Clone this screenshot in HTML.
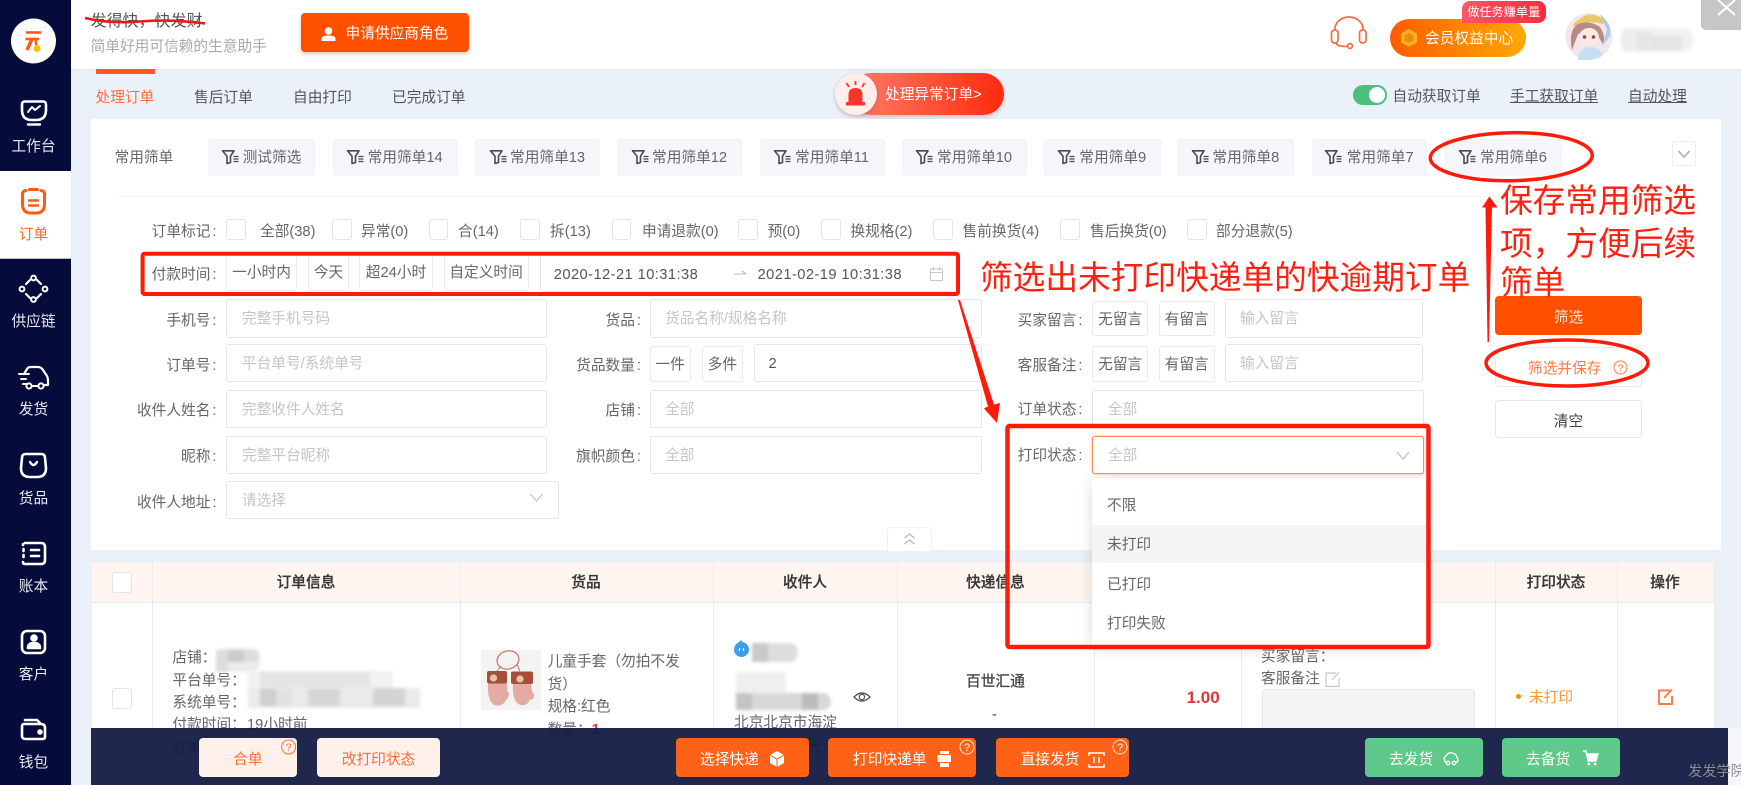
<!DOCTYPE html>
<html lang="zh-CN"><head><meta charset="utf-8"><title>发得快</title>
<style>
html,body{margin:0;padding:0}
body{width:1741px;height:785px;overflow:hidden;position:relative;background:#eaf1f9;font-family:"Liberation Sans","Noto Sans CJK SC",sans-serif;font-size:14.7px;color:#666}
.w{position:absolute;left:0;top:0;width:1741px;height:785px;filter:blur(.35px)}
.a{position:absolute;box-sizing:border-box}
.t{position:absolute;white-space:nowrap;line-height:20px;height:20px}
.s{position:absolute;left:0;width:67px;text-align:center;color:#e8e9f0;line-height:20px;white-space:nowrap}
.chip{position:absolute;top:139px;height:37px;background:#f5f6f9;border-radius:3px;line-height:37px;color:#666;white-space:nowrap;box-sizing:border-box;padding-left:34px;border:1px solid #f1f2f5}
.cb{position:absolute;top:219px;width:19.5px;height:20.5px;background:#fff;border:1px solid #e3e4e7;border-radius:3px;box-sizing:border-box}
.ft{position:absolute;top:222px;line-height:20px;white-space:nowrap;color:#666}
.lb{position:absolute;text-align:right;white-space:nowrap;line-height:20px;color:#666}
.lb span{margin-left:2px}
.box{position:absolute;background:#fff;border:1px solid #e4e5e8;border-radius:3px;box-sizing:border-box;line-height:39px;color:#c3c5c9;white-space:nowrap}
.btn{position:absolute;background:#fff;border:1px solid #e9eaec;border-radius:3px;box-sizing:border-box;text-align:center;color:#666;white-space:nowrap;line-height:36px}
.bb{position:absolute;top:738px;height:39px;border-radius:4px;line-height:45px;white-space:nowrap;box-sizing:border-box}
.th{position:absolute;top:573px;line-height:20px;font-weight:500;color:#383838;white-space:nowrap;transform:translateX(-50%);-webkit-text-stroke:.25px #383838}
.sep{position:absolute;width:1px;background:#e9ecf1}
.pix{position:absolute;filter:blur(1.5px)}
.pix i{position:absolute;display:block}
.dd{position:absolute;left:1107px;color:#666;line-height:20px;white-space:nowrap}
</style></head><body><div class="w">

<!-- header -->
<div class="a" style="left:71px;top:0;width:1670px;height:70px;background:#fff;border-bottom:1px solid #dfe4eb"></div>
<div class="a" style="left:1716px;top:70px;width:25px;height:1px;background:#eaf1f9"></div>
<div class="t" style="left:90.6px;top:12px;font-size:16px;color:#555">发得快，快发财</div>
<div class="t" style="left:90.6px;top:37px;color:#aaa">简单好用可信赖的生意助手</div>
<div class="a" style="left:301px;top:13px;width:168px;height:39px;background:#ff5000;border-radius:4px;box-shadow:0 2px 4px rgba(150,60,20,.3)"></div>
<div class="t" style="left:345.5px;top:23.5px;color:#fff">申请供应商角色</div>
<div class="a" style="left:1701px;top:0;width:40px;height:30px;background:#c6c6c6;border-bottom-left-radius:5px"></div>

<!-- tabs -->
<div class="a" style="left:95.5px;top:69px;width:59px;height:5px;background:#ff5a1f"></div>
<div class="t" style="left:95.5px;top:88px;color:#ff6c3f">处理订单</div>
<div class="t" style="left:194px;top:88px;color:#555">售后订单</div>
<div class="t" style="left:293px;top:88px;color:#555">自由打印</div>
<div class="t" style="left:392px;top:88px;color:#555">已完成订单</div>
<div class="a" style="left:850px;top:73px;width:153.6px;height:42px;border-radius:21px;background:linear-gradient(90deg,#ff7d6a,#ff2a0e);box-shadow:0 2px 4px rgba(120,50,50,.25)"></div>
<div class="a" style="left:834.5px;top:73px;width:42px;height:42px;border-radius:50%;background:#fdeeea;box-shadow:0 2px 4px rgba(120,50,50,.3)"></div>
<div class="t" style="left:885px;top:85px;color:#fff">处理异常订单&gt;</div>
<div class="a" style="left:1352.5px;top:85px;width:34px;height:20px;border-radius:10px;background:#4cbf7c"></div>
<div class="a" style="left:1369px;top:87px;width:16px;height:16px;border-radius:50%;background:#fff"></div>
<div class="t" style="left:1392.5px;top:87px;color:#555">自动获取订单</div>
<div class="t" style="left:1510px;top:87px;color:#555;text-decoration:underline">手工获取订单</div>
<div class="t" style="left:1628px;top:87px;color:#555;text-decoration:underline">自动处理</div>

<!-- VIP -->
<div class="a" style="left:1390px;top:19px;width:135.5px;height:38px;border-radius:19px;background:linear-gradient(90deg,#ff5c00,#ffa900)"></div>
<div class="t" style="left:1425px;top:28.5px;color:#fff">会员权益中心</div>
<div class="a" style="left:1461.5px;top:1px;width:84.5px;height:22px;background:linear-gradient(90deg,#ff5764,#ff2b3d);border-radius:8px 8px 8px 0;color:#fff;font-size:12.2px;line-height:22px;text-align:center;white-space:nowrap">做任务赚单量</div>
<div class="pix" style="left:1620px;top:28px;width:73px;height:24px;background:#f1f1f1;border-radius:10px">
<i style="left:2px;top:0;width:12px;height:24px;background:#ececec;border-radius:8px"></i>
<i style="left:16px;top:4px;width:16px;height:18px;background:#e6e6e6"></i>
<i style="left:32px;top:8px;width:30px;height:14px;background:#e4e4e4"></i>
</div>

<!-- sidebar -->
<div class="a" style="left:0;top:0;width:71px;height:785px;background:#050b3a"></div>
<div class="a" style="left:0;top:171px;width:71px;height:87px;background:#fff"></div>
<div class="a" style="left:0;top:258px;width:71px;height:1px;background:#b9bcc8"></div>
<div class="s" style="top:137px">工作台</div>
<div class="s" style="top:225px;color:#ff6a2c">订单</div>
<div class="s" style="top:312px">供应链</div>
<div class="s" style="top:400px">发货</div>
<div class="s" style="top:489px">货品</div>
<div class="s" style="top:577px">账本</div>
<div class="s" style="top:665px">客户</div>
<div class="s" style="top:753px">钱包</div>

<!-- filter card -->
<div class="a" style="left:91px;top:119px;width:1630px;height:431px;background:#fff;border-radius:3px 3px 0 0"></div>
<div class="t" style="left:114.5px;top:148px">常用筛单</div>
<div class="chip" style="left:207.6px;width:107.4px">测试筛选</div>
<div class="chip" style="left:332.6px;width:125px">常用筛单14</div>
<div class="chip" style="left:475px;width:124.6px">常用筛单13</div>
<div class="chip" style="left:617px;width:125.4px">常用筛单12</div>
<div class="chip" style="left:760px;width:125px">常用筛单11</div>
<div class="chip" style="left:902px;width:125px">常用筛单10</div>
<div class="chip" style="left:1044.3px;width:116.7px">常用筛单9</div>
<div class="chip" style="left:1177.4px;width:116.6px">常用筛单8</div>
<div class="chip" style="left:1311.7px;width:115.3px">常用筛单7</div>
<div class="chip" style="left:1445px;width:116.5px">常用筛单6</div>
<div class="a" style="left:1671.7px;top:141px;width:24.5px;height:25px;background:#fff;border:1px solid #eceef1"></div>
<div class="a" style="left:116.5px;top:196px;width:1580px;height:1px;background:#f3f4f6"></div>

<!-- flags -->
<div class="lb" style="left:100px;width:116.5px;top:222px">订单标记<span>:</span></div>
<div class="cb" style="left:226.4px"></div><div class="ft" style="left:260px">全部(38)</div>
<div class="cb" style="left:332px"></div><div class="ft" style="left:361px">异常(0)</div>
<div class="cb" style="left:428.5px"></div><div class="ft" style="left:458px">合(14)</div>
<div class="cb" style="left:520px"></div><div class="ft" style="left:550px">拆(13)</div>
<div class="cb" style="left:611.5px"></div><div class="ft" style="left:642px">申请退款(0)</div>
<div class="cb" style="left:738px"></div><div class="ft" style="left:767.6px">预(0)</div>
<div class="cb" style="left:821px"></div><div class="ft" style="left:850.4px">换规格(2)</div>
<div class="cb" style="left:933px"></div><div class="ft" style="left:962.5px">售前换货(4)</div>
<div class="cb" style="left:1060px"></div><div class="ft" style="left:1090px">售后换货(0)</div>
<div class="cb" style="left:1187px"></div><div class="ft" style="left:1216px">部分退款(5)</div>

<!-- time -->
<div class="lb" style="left:100px;width:116.5px;top:265px">付款时间<span>:</span></div>
<div class="btn" style="left:226.4px;width:70.3px;top:254px;height:37px;line-height:37px">一小时内</div>
<div class="btn" style="left:308px;width:41px;top:254px;height:37px;line-height:37px">今天</div>
<div class="btn" style="left:359px;width:74px;top:254px;height:37px;line-height:37px">超24小时</div>
<div class="btn" style="left:443.6px;width:85px;top:254px;height:37px;line-height:37px">自定义时间</div>
<div class="box" style="left:539.8px;width:420px;top:254px;height:38px"></div>
<div class="t" style="left:553.8px;top:265px;color:#555;letter-spacing:.42px">2020-12-21 10:31:38</div>
<div class="t" style="left:757.6px;top:265px;color:#555;letter-spacing:.42px">2021-02-19 10:31:38</div>

<!-- left inputs -->
<div class="lb" style="left:100px;width:116.5px;top:310.500px">手机号<span>:</span></div>
<div class="box" style="left:226.4px;width:320.6px;top:299.3px;height:38.4px;padding-left:14.5px">完整手机号码</div>
<div class="lb" style="left:100px;width:116.5px;top:355.500px">订单号<span>:</span></div>
<div class="box" style="left:226.4px;width:320.6px;top:344px;height:38.4px;padding-left:14.5px">平台单号/系统单号</div>
<div class="lb" style="left:100px;width:116.5px;top:401px">收件人姓名<span>:</span></div>
<div class="box" style="left:226.4px;width:320.6px;top:389.7px;height:38.4px;padding-left:14.5px">完整收件人姓名</div>
<div class="lb" style="left:100px;width:116.5px;top:447px">昵称<span>:</span></div>
<div class="box" style="left:226.4px;width:320.6px;top:435.7px;height:38.4px;padding-left:14.5px">完整平台昵称</div>
<div class="lb" style="left:100px;width:116.5px;top:492.500px">收件人地址<span>:</span></div>
<div class="box" style="left:226.4px;width:332.6px;top:481px;height:38.4px;padding-left:14.5px">请选择</div>

<!-- middle -->
<div class="lb" style="left:540px;width:101px;top:310.500px">货品<span>:</span></div>
<div class="box" style="left:649.6px;width:332.4px;top:299.3px;height:38.4px;padding-left:14.5px">货品名称/规格名称</div>
<div class="lb" style="left:540px;width:101px;top:355.500px">货品数量<span>:</span></div>
<div class="btn" style="left:649.6px;width:41px;top:345.5px;height:36px">一件</div>
<div class="btn" style="left:701.7px;width:41.3px;top:345.5px;height:36px">多件</div>
<div class="box" style="left:753.5px;width:228.5px;top:344px;height:38.4px;padding-left:14px;color:#555">2</div>
<div class="lb" style="left:540px;width:101px;top:401px">店铺<span>:</span></div>
<div class="box" style="left:649.6px;width:332.4px;top:389.7px;height:38.4px;padding-left:14.5px">全部</div>
<div class="lb" style="left:540px;width:101px;top:447px">旗帜颜色<span>:</span></div>
<div class="box" style="left:649.6px;width:332.4px;top:435.7px;height:38.4px;padding-left:14.5px">全部</div>

<!-- right -->
<div class="lb" style="left:980px;width:102.5px;top:310.500px">买家留言<span>:</span></div>
<div class="btn" style="left:1092.4px;width:55.6px;top:301px;height:35px">无留言</div>
<div class="btn" style="left:1158.6px;width:56.2px;top:301px;height:35px">有留言</div>
<div class="box" style="left:1225px;width:198px;top:299.3px;height:38.4px;padding-left:14px">输入留言</div>
<div class="lb" style="left:980px;width:102.5px;top:355.500px">客服备注<span>:</span></div>
<div class="btn" style="left:1092.4px;width:55.6px;top:345.5px;height:36px">无留言</div>
<div class="btn" style="left:1158.6px;width:56.2px;top:345.5px;height:36px">有留言</div>
<div class="box" style="left:1225px;width:198px;top:344px;height:38.4px;padding-left:14px">输入留言</div>
<div class="lb" style="left:980px;width:102.5px;top:399.500px">订单状态<span>:</span></div>
<div class="box" style="left:1092.4px;width:331.6px;top:389.7px;height:38.4px;padding-left:14.5px">全部</div>
<div class="lb" style="left:980px;width:102.5px;top:445.500px">打印状态<span>:</span></div>
<div class="box" style="left:1092.4px;width:331.6px;top:435.7px;height:38.6px;padding-left:14.5px;border-color:#ff8a55;box-shadow:0 0 3px rgba(255,120,60,.5);z-index:3">全部</div>

<!-- action buttons -->
<div class="a" style="left:1495px;top:296px;width:147px;height:39px;background:#ff5000;border-radius:4px;text-align:center;line-height:45px;color:#ffe9df;white-space:nowrap">筛选</div>
<div class="a" style="left:1495px;top:347px;width:147px;height:39.7px;background:#fff;border:1px solid #e8e9ec;border-radius:4px"></div>
<div class="t" style="left:1528px;top:359px;color:#ff7a45">筛选并保存</div>
<div class="a" style="left:1495px;top:399.7px;width:147px;height:38.5px;background:#fff;border:1px solid #e4e5e8;border-radius:4px;text-align:center;line-height:42px;color:#444;white-space:nowrap">清空</div>
<div class="a" style="left:887px;top:527px;width:45px;height:24px;background:#fff;border:1px solid #eef0f3;border-bottom:0;border-radius:4px 4px 0 0"></div>

<!-- table -->
<div class="a" style="left:91.5px;top:561px;width:1629.5px;height:224px;background:#fff;border-top:1px solid #e7ebf1"></div>
<div class="a" style="left:91.5px;top:562px;width:1622.5px;height:41px;background:#fff5f0;border-bottom:1px solid #e7ebf1"></div>
<div class="a" style="left:1714px;top:562px;width:7px;height:223px;background:#eceef0"></div>
<div class="sep" style="left:152.4px;top:562px;height:223px"></div>
<div class="sep" style="left:460px;top:562px;height:223px"></div>
<div class="sep" style="left:713px;top:562px;height:223px"></div>
<div class="sep" style="left:897.4px;top:562px;height:223px"></div>
<div class="sep" style="left:1094px;top:562px;height:223px"></div>
<div class="sep" style="left:1240.7px;top:562px;height:223px"></div>
<div class="sep" style="left:1495px;top:562px;height:223px"></div>
<div class="sep" style="left:1617px;top:562px;height:223px"></div>
<div class="sep" style="left:1714px;top:562px;height:223px"></div>
<div class="cb" style="left:112px;top:572px"></div>
<div class="cb" style="left:112px;top:688px"></div>
<div class="th" style="left:306px">订单信息</div>
<div class="th" style="left:586px">货品</div>
<div class="th" style="left:805px">收件人</div>
<div class="th" style="left:995.5px">快递信息</div>
<div class="th" style="left:1556px">打印状态</div>
<div class="th" style="left:1665px">操作</div>

<div class="t" style="left:172.4px;top:648px">店铺：</div>
<div class="t" style="left:172.4px;top:671px">平台单号：</div>
<div class="t" style="left:172.4px;top:693px">系统单号：</div>
<div class="t" style="left:172.4px;top:715px">付款时间：</div>
<div class="t" style="left:247px;top:715px">19小时前</div>
<div class="t" style="left:172.4px;top:739px">订单状态：</div>
<div class="t" style="left:247px;top:739px;color:#ff7a45">待备货</div>
<div class="pix" style="left:216px;top:648px;width:44px;height:24px;background:#ececec;border-radius:9px">
<i style="left:0;top:2px;width:12px;height:22px;background:#ddd"></i><i style="left:12px;top:2px;width:16px;height:12px;background:#ccc"></i><i style="left:28px;top:2px;width:14px;height:12px;background:#ddd"></i></div>
<div class="pix" style="left:248px;top:671px;width:145px;height:22px;background:#f1f1f1"></div>
<div class="pix" style="left:248px;top:688px;width:172px;height:20px;background:#eaeaea">
<i style="left:12px;top:0;width:16px;height:18px;background:#cfcfcf"></i><i style="left:28px;top:0;width:16px;height:18px;background:#e2e2e2"></i><i style="left:60px;top:0;width:32px;height:18px;background:#d6d6d6"></i><i style="left:125px;top:0;width:32px;height:18px;background:#d4d4d4"></i></div>
<div class="pix" style="left:260px;top:672px;width:110px;height:16px;background:#e4e4e4"></div>

<div class="a" style="left:481px;top:650px;width:60px;height:60px;background:#f3f3f3"></div>
<div class="t" style="left:547.6px;top:652px">儿童手套（勿拍不发</div>
<div class="t" style="left:547.6px;top:675px">货）</div>
<div class="t" style="left:547.6px;top:697px">规格:红色</div>
<div class="t" style="left:547.6px;top:720px">数量：<b style="color:#e8323c">1</b></div>

<div class="a" style="left:734px;top:642px;width:15px;height:15px;border-radius:50%;background:#3d9fe8"></div>
<div class="pix" style="left:752px;top:643px;width:46px;height:19px;background:#ddd;border-radius:9px">
<i style="left:0;top:0;width:16px;height:19px;background:#c9c9c9"></i></div>
<div class="pix" style="left:736px;top:672px;width:50px;height:22px;background:#efefef"></div>
<div class="pix" style="left:736px;top:693px;width:95px;height:17px;background:#d8d8d8;border-radius:0 8px 8px 0">
<i style="left:0;top:0;width:16px;height:17px;background:#c4c4c4"></i><i style="left:66px;top:0;width:16px;height:17px;background:#bcbcbc"></i></div>
<div class="t" style="left:734px;top:713px">北京北京市海淀</div>
<div class="t" style="left:734px;top:738px">区西直门北大...</div>

<div class="t" style="left:966px;top:672px;color:#444;-webkit-text-stroke:.3px #444">百世汇通</div>
<div class="t" style="left:992px;top:705px;color:#444">-</div>
<div class="t" style="left:1186.6px;top:688px;color:#e8323c;font-size:17px;font-weight:bold">1.00</div>
<div class="t" style="left:1261px;top:647px">买家留言：</div>
<div class="t" style="left:1261px;top:669px">客服备注</div>
<div class="a" style="left:1262px;top:689px;width:212.5px;height:64px;background:#f4f4f4;border:1px solid #e6e6e6;border-radius:3px"></div>
<div class="a" style="left:1516px;top:693.5px;width:5px;height:5px;border-radius:50%;background:#ff8c00"></div>
<div class="t" style="left:1529px;top:688px;color:#ff9a30">未打印</div>

<!-- bottom bar -->
<div class="a" style="left:91px;top:728px;width:1637px;height:57px;background:rgba(20,27,67,.95)"></div>
<div class="bb" style="left:198.7px;width:98.3px;background:#fff1ea;color:#ff6a3c;text-align:center">合单</div>
<div class="bb" style="left:317px;width:123px;background:#fff1ea;color:#ff6a3c;text-align:center">改打印状态</div>
<div class="bb" style="left:676px;width:133px;background:#ff6217;color:#fff;padding-left:24px">选择快递</div>
<div class="bb" style="left:828px;width:148px;background:#ff6217;color:#fff;padding-left:25px">打印快递单</div>
<div class="bb" style="left:996px;width:133px;background:#ff6217;color:#fff;padding-left:24.6px">直接发货</div>
<div class="bb" style="left:1364.6px;width:118.4px;background:#5fc98a;color:#fff;padding-left:24.4px">去发货</div>
<div class="bb" style="left:1502px;width:118px;background:#5fc98a;color:#fff;padding-left:24px">去备货</div>
<div class="a" style="left:1728px;top:728px;width:13px;height:57px;background:#f4f6fa"></div>
<div class="t" style="left:1688px;top:762px;color:#8c8c8c;font-size:14.2px">发发学院</div>

<!-- dropdown -->
<div class="a" style="left:1092.4px;top:478px;width:334px;height:169px;background:#fff;box-shadow:0 2px 14px rgba(0,0,0,.14)"></div>
<div class="a" style="left:1092.4px;top:525px;width:334px;height:38px;background:#f4f4f4"></div>
<div class="dd" style="top:496px">不限</div>
<div class="dd" style="top:535px">未打印</div>
<div class="dd" style="top:574.500px">已打印</div>
<div class="dd" style="top:614px">打印失败</div>

<!-- overlay icons & annotations -->
<svg class="a" style="left:0;top:0;z-index:5" width="1741" height="785" viewBox="0 0 1741 785" fill="none">
<defs>
<symbol id="fn" viewBox="0 0 17 14" overflow="visible"><path d="M.5.8H12L8.500 6.200V12.500L5 13.500V6.200Z" stroke="#4a4a4a" stroke-width="1.600" stroke-linejoin="round"/><path d="M11.500 6.500H16.500M11.500 9H16.500M11.500 11.500H16.500" stroke="#4a4a4a" stroke-width="1.200"/></symbol>
</defs>
<!-- close X -->
<path d="M1718 0L1735 15M1735 0L1718 15" stroke="#fff" stroke-width="2"/>
<!-- logo -->
<circle cx="33.5" cy="41" r="22.5" fill="#fff"/>
<path d="M26 32.5H41" stroke="#ff5a14" stroke-width="2.6"/><path d="M25.5 39H39" stroke="#ff5a14" stroke-width="2.6"/><path d="M32 39L27 50" stroke="#ff5a14" stroke-width="3.4"/><path d="M36 39V45" stroke="#ff5a14" stroke-width="2.4"/>
<circle cx="37" cy="48.5" r="3.6" fill="#ffc20e"/>
<!-- sidebar icons -->
<g stroke="#fff" stroke-width="2.6" stroke-linecap="round" stroke-linejoin="round">
<path d="M25 101.500H43Q46 101.500 46 104.500V110Q46 120 36 120H32Q22 120 22 110V104.500Q22 101.500 25 101.500Z"/><path d="M28 112L32 107L35 110L40 106" stroke-width="2"/><path d="M28 124.500H40" stroke-width="2.400"/>
<path d="M26 190.500Q22 191 22.500 195V204Q22.500 213 31 213H36Q44.500 213 44.500 204V195Q45 191 41 190.500" stroke="#ff5a14" stroke-width="3"/><path d="M28 200.500H39M28 205.500H39" stroke="#ff5a14" stroke-width="2.600" stroke-linecap="butt"/><path d="M29.500 189.500H37.500" stroke="#ff5a14" stroke-width="3"/>
<path d="M37 280L41 284M41 294L37 298M30 298L26 294M26 284L30 280" stroke-width="2.200"/>
<g stroke-width="2"><circle cx="33.500" cy="278" r="2.400"/><circle cx="45" cy="289" r="2.400"/><circle cx="33.500" cy="299.500" r="2.400"/><circle cx="22" cy="289" r="2.400"/></g>
<path d="M24 374L27 369Q28 367 31 367H38Q41 367 43 370L47 376Q48 378 48 381V385H44" stroke-width="2.2"/><path d="M33 386H37M19 374H29M21 379H26M23 384H27" stroke-width="2"/><circle cx="29" cy="386" r="2.6" stroke-width="2"/><circle cx="41" cy="386" r="2.6" stroke-width="2"/>
<path d="M26 454H41Q45 454 45 458L46 468Q46 477 37 477H30Q21 477 21 468L22 458Q22 454 26 454Z"/><path d="M30 462Q33.5 468 37 462" stroke-width="2.4"/>
<path d="M25 543H41Q45 543 45 547V560Q45 564 41 564H25Q23 564 23 562M23 545V544" /><path d="M31 550H39M31 556H39M23.5 549V551M23.5 555V557"/>
<rect x="22" y="631" width="23" height="22" rx="5"/><circle cx="34" cy="638" r="2.5" fill="#fff"/><path d="M28 648Q28 643 34 643Q40 643 40 648Z" fill="#fff"/>
<path d="M25 720H37L41 724M24 724H41Q45 724 45 728V737Q45 739 42 739H26Q22 739 22 736V727Q22 724 24 724Z"/><circle cx="40" cy="732" r="1.5" fill="#fff"/>
</g>
<!-- header person -->
<circle cx="328.500" cy="31" r="3.800" fill="#fff"/><path d="M321.500 41V39Q321.500 35.500 328.500 35.500Q335.500 35.500 335.500 39V41Z" fill="#fff"/>
<!-- strike -->
<path d="M85 18Q110 24 140 21.5T205 23.5" stroke="#ef1717" stroke-width="2.6"/>
<!-- alarm -->
<path d="M848.500 102V95Q848.500 88 855.500 88Q862.500 88 862.500 95V102Z" fill="#f5352c"/><rect x="846" y="102" width="19" height="3.500" rx="1" fill="#f5352c"/><path d="M855.500 81V85M846.500 83L849 87M864.500 83L862 87" stroke="#f5352c" stroke-width="1.800"/>
<!-- headset -->
<g stroke="#ff6a3c" stroke-width="1.7"><path d="M1335 30V29A14 12 0 0 1 1363 29V30"/><rect x="1331.5" y="30" width="6.5" height="13" rx="3"/><rect x="1359.5" y="30" width="6.5" height="13" rx="3"/><path d="M1336 43Q1337 46.5 1347 46.5"/><circle cx="1350" cy="46" r="2.4"/></g>
<!-- hex -->
<path d="M1409 29L1417 33.5V42.5L1409 47L1401 42.5V33.5Z" fill="#f7b01e"/><path d="M1409 33L1413.500 35.500V40.500L1409 43L1404.500 40.500V35.500Z" fill="#f08a10"/>
<!-- avatar -->
<circle cx="1589" cy="36.500" r="23.500" fill="#f2e6ea"/>
<path d="M1573 25Q1589 6 1607 22L1602 24Q1588 19 1576 27Z" fill="#e8c96a"/>
<path d="M1572 50Q1568 30 1578 24Q1590 20 1600 27Q1606 36 1603 44L1596 33Q1585 31 1578 34Z" fill="#b78a88"/>
<ellipse cx="1589" cy="37" rx="10" ry="9" fill="#fbe9e2"/><circle cx="1584.500" cy="37" r="1.800" fill="#8a4a5a"/><circle cx="1593.500" cy="37" r="1.800" fill="#8a4a5a"/>
<path d="M1578 60Q1580 47 1589 47Q1600 47 1603 55Q1596 60 1589 60Z" fill="#c7dff0"/>
<path d="M1600 14L1607 30L1602 46L1610 36Q1612 24 1600 14Z" fill="#a9cde6"/>
<!-- funnels -->
<use href="#fn" x="222" y="150" width="17" height="14"/><use href="#fn" x="347" y="150" width="17" height="14"/><use href="#fn" x="490" y="150" width="17" height="14"/><use href="#fn" x="632" y="150" width="17" height="14"/><use href="#fn" x="774" y="150" width="17" height="14"/><use href="#fn" x="916" y="150" width="17" height="14"/><use href="#fn" x="1058" y="150" width="17" height="14"/><use href="#fn" x="1192" y="150" width="17" height="14"/><use href="#fn" x="1325" y="150" width="17" height="14"/><use href="#fn" x="1459" y="150" width="17" height="14"/>
<!-- collapse chevron -->
<path d="M1678.500 151L1684 157L1689.500 151" stroke="#b5b8bd" stroke-width="1.800"/>
<!-- date arrow & calendar -->
<path d="M734 274H746M742 271L746 274" stroke="#bbb" stroke-width="1.100"/>
<g stroke="#c5c7ca" stroke-width="1.100"><rect x="930.500" y="269" width="12" height="11.500"/><path d="M930.500 272.500H942.500M933.500 267V270M939.500 267V270"/></g>
<!-- select chevrons -->
<path d="M530.500 494L536.500 501L542.500 494" stroke="#c0c2c6" stroke-width="1.200"/>
<path d="M1397 452L1403 459L1409 452" stroke="#c0c2c6" stroke-width="1.300"/>
<!-- double chevrons -->
<path d="M904.500 538L909.500 534L914.500 538M904.500 544L909.500 540L914.500 544" stroke="#b7bac0" stroke-width="1.300"/>
<!-- help in save btn -->
<circle cx="1620.500" cy="367.500" r="6.500" stroke="#ff7a45" stroke-width="1"/>
<text x="1620.500" y="371.500" text-anchor="middle" font-size="10.500" fill="#ff7a45" font-family="Liberation Sans">?</text>
<!-- mittens -->
<g>
<ellipse cx="508" cy="660" rx="11" ry="9" stroke="#c67566" stroke-width="1.200" transform="rotate(-15 508 660)"/>
<path d="M497 671L501 666M520 671L517 664" stroke="#c67566" stroke-width="1"/>
<path d="M488 683Q487 700 494 705Q503 707 506 700Q508 692 507 683Z" fill="#e5aba3"/><path d="M505 690Q511 692 508 698L505 701Z" fill="#e5aba3"/>
<path d="M513 683Q512 695 516 702Q522 708 528 703Q533 696 531 683Z" fill="#e5aba3"/><path d="M530 689Q536 694 533 699L529 700Z" fill="#e5aba3"/>
<rect x="487" y="671" width="20" height="12.500" rx="2" fill="#a5503a"/><rect x="511" y="671.500" width="22" height="12.500" rx="2" fill="#a5503a"/>
<circle cx="493.500" cy="678" r="3.600" fill="#e6c3ab"/><circle cx="520" cy="679" r="3.600" fill="#e6c3ab"/>
</g>
<!-- qq dots -->
<path d="M739.500 648V651M743.500 648V651" stroke="#fff" stroke-width="1.200"/><path d="M738 643L741 640L743 643Z" fill="#3d9fe8"/>
<!-- eye -->
<g stroke="#555" stroke-width="1.300"><path d="M854 697Q862 689 870 697Q862 705 854 697Z"/><circle cx="862" cy="697" r="2.600"/></g>
<!-- edit icons -->
<g stroke="#c8c8c8" stroke-width="1.200"><path d="M1336 673H1326V686.500H1339V678"/><path d="M1332 680L1339 672"/></g>
<g stroke="#ff7a45" stroke-width="1.900"><path d="M1670 690.500H1659V704H1672V696"/><path d="M1664 698L1672 689.500"/></g>
<!-- bottom help icons -->
<g stroke="#ff7a45" stroke-width="1.100"><circle cx="288.600" cy="747" r="7"/></g>
<text x="288.600" y="751" text-anchor="middle" font-size="11" fill="#ff7a45" font-family="Liberation Sans">?</text>
<g stroke="#fff" stroke-width="1" opacity=".85"><circle cx="967" cy="747" r="7"/><circle cx="1120" cy="747" r="7"/></g>
<text x="967" y="751" text-anchor="middle" font-size="11" fill="#fff" font-family="Liberation Sans">?</text>
<text x="1120" y="751" text-anchor="middle" font-size="11" fill="#fff" font-family="Liberation Sans">?</text>
<!-- bottom button icons -->
<path d="M777 751L784 755V763L777 767L770 763V755Z" fill="#fff"/><path d="M777 759V767M770 755L777 759L784 755" stroke="#ff6217" stroke-width="1"/>
<g fill="#fff"><rect x="940" y="751" width="9" height="3"/><rect x="937.500" y="755" width="13.500" height="7" rx="1"/><rect x="940" y="763" width="9" height="4"/></g>
<g stroke="#fff" stroke-width="1.500"><path d="M1089 756V753H1104V756M1089 764V767H1104V764"/><path d="M1094 757V763M1099 757V763"/></g>
<g stroke="#fff" stroke-width="1.300"><path d="M1446 762H1445Q1443 758 1446 756Q1448 752 1452 753Q1457 754 1457 758Q1459 760 1457 762H1456"/><circle cx="1448" cy="763" r="1.700"/><circle cx="1454" cy="763" r="1.700"/></g>
<g><path d="M1583 751H1586L1588 761H1596L1598 754H1587" stroke="#fff" stroke-width="1.400" fill="#fff"/><circle cx="1589" cy="764" r="1.400" fill="#fff"/><circle cx="1595" cy="764" r="1.400" fill="#fff"/></g>

<!-- annotations -->
<rect x="142.600" y="253.700" width="815.400" height="40.300" rx="2" stroke="#ff1a0a" stroke-width="4"/>
<rect x="1007.500" y="426" width="421" height="221" rx="2" stroke="#ff1a0a" stroke-width="4.500"/>
<ellipse cx="1511.300" cy="156.700" rx="81" ry="24" stroke="#ff1a0a" stroke-width="3.500" transform="rotate(-1 1511 157)"/>
<ellipse cx="1567" cy="363" rx="81" ry="23" stroke="#ff1a0a" stroke-width="3.500"/>
<path d="M1489.400 196.500L1497.500 207.500H1492L1489 342H1487.500L1485.500 207.500H1482Z" fill="#ff1a0a"/>
<path d="M958 300L960 300L994 404.500L1000 403L997 423L984 408.500L988 406.500Z" fill="#ff1a0a"/>
<g fill="#ff2010" font-family="Liberation Sans,Noto Sans CJK SC,sans-serif" font-size="32.700">
<text x="1500" y="212">保存常用筛选</text>
<text x="1500" y="255">项，方便后续</text>
<text x="1500" y="294">筛单</text>
<text x="980" y="289">筛选出未打印快递单的快逾期订单</text>
</g>
</svg>
</div></body></html>
